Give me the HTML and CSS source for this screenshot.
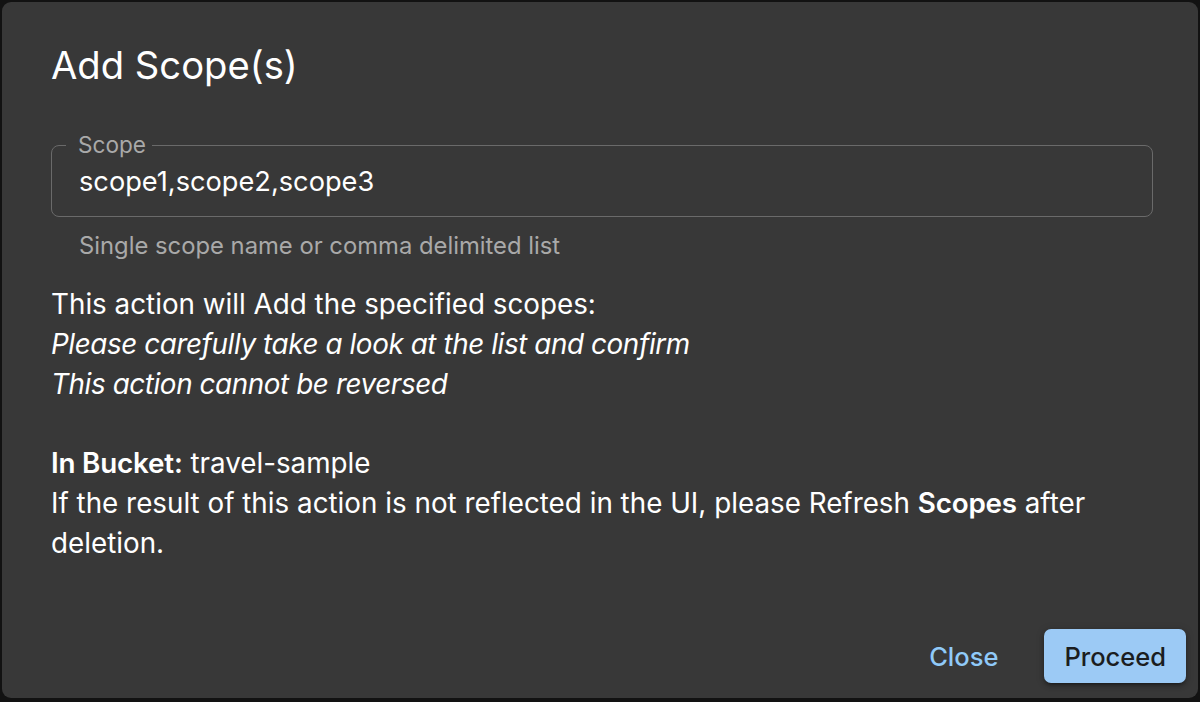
FILE: index.html
```html
<!DOCTYPE html>
<html lang="en">
<head>
<meta charset="utf-8">
<title>Add Scope(s)</title>
<link rel="stylesheet" href="styles.css">
</head>
<body>
<div class="dialog" role="dialog" aria-labelledby="dlg-title">
  <h2 class="dialog-title" id="dlg-title">Add Scope(s)</h2>
  <div class="dialog-content">
    <fieldset class="field">
      <legend class="field-label">Scope</legend>
      <div class="field-input">scope1,scope2,scope3</div>
    </fieldset>
    <p class="helper">Single scope name or comma delimited list</p>
    <div class="message">
      <p class="line">This action will Add the specified scopes:</p>
      <p class="line italic">Please carefully take a look at the list and confirm</p>
      <p class="line italic">This action cannot be reversed</p>
      <p class="line spacer">&nbsp;</p>
      <p class="line"><strong>In Bucket:</strong> travel-sample</p>
      <p class="line"><span>If the result of this action is not reflected in the UI, please Refresh</span> <strong>Scopes</strong> <span>after</span> <span>deletion.</span></p>
    </div>
  </div>
  <div class="dialog-actions">
    <button class="btn btn-text" type="button">Close</button>
    <button class="btn btn-contained" type="button">Proceed</button>
  </div>
</div>
</body>
</html>
```
FILE: styles.css
```css
* { box-sizing: border-box; }
html, body { height: 100%; }
body {
  margin: 0;
  padding: 2px 2px 4px 2px;
  background: #121212;
  font-family: Inter, "Noto Sans", "Liberation Sans", sans-serif;
  color: #ffffff;
  overflow: hidden;
}
.dialog {
  height: 696px;
  background: #383838;
  border-radius: 9px;
  display: flex;
  flex-direction: column;
  padding: 0 12px 15px 49px;
}
.dialog-title {
  margin: 0;
  padding-top: 38px;
  font-size: 38.2px;
  line-height: 50px;
  font-weight: 400;
  letter-spacing: 0;
}
.dialog-content {
  padding-right: 33px;
  padding-top: 43px;
}
.field {
  margin: 0;
  border: 1.5px solid #6a6a6a;
  border-radius: 8px;
  padding: 0 14px 18px 14px;
  min-width: 0;
}
.field-label {
  padding: 0 6px 0 12px;
  font-size: 22.6px;
  line-height: 24px;
  color: #a9a9a9;
}
.field-input {
  padding: 0 0 0 13px;
  margin-top: 9px;
  font-size: 27.2px;
  line-height: 32px;
  color: #ffffff;
}
.helper {
  margin: 13px 0 0 28px;
  font-size: 23.8px;
  line-height: 32px;
  color: #a9a9a9;
}
.message {
  margin-top: 23px;
}
.line {
  margin: 0;
  font-size: 27.8px;
  line-height: 39.8px;
}
.italic { font-style: italic; letter-spacing: -0.4px; }
.line strong { font-weight: 600; letter-spacing: -0.2px; }
.dialog-actions {
  margin-top: auto;
  display: flex;
  justify-content: flex-end;
  align-items: center;
  gap: 30px;
}
.btn {
  font-family: inherit;
  font-size: 25.5px;
  font-weight: 500;
  border: none;
  border-radius: 7px;
  height: 54px;
  padding: 0 20px;
  cursor: pointer;
}
.btn-text {
  background: transparent;
  color: #90caf9;
  padding: 0 16px;
}
.btn-contained {
  background: #9ccaf5;
  color: #1b1d20;
  box-shadow: 0 3px 3px -2px rgba(0,0,0,0.3), 0 3px 5px 0 rgba(0,0,0,0.2), 0 1px 9px 0 rgba(0,0,0,0.18);
}
```
